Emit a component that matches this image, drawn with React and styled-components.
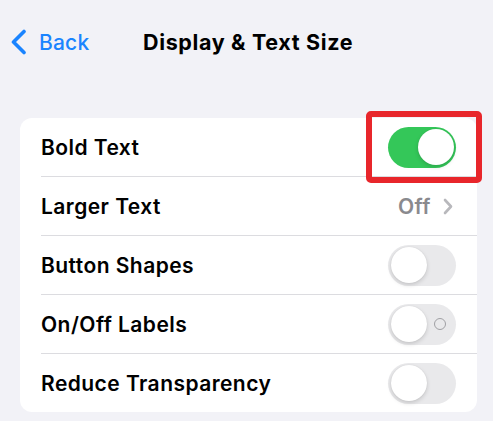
import React from 'react';
import styled, { createGlobalStyle } from 'styled-components';

const GlobalStyle = createGlobalStyle`
  html, body {
    margin: 0;
    padding: 0;
    background: #f2f2f7;
    font-family: Inter, "Noto Sans", sans-serif;
    -webkit-font-smoothing: antialiased;
  }
`;

const Page = styled.div`
  width: 493px;
  height: 421px;
  background: #f2f2f7;
  overflow: hidden;
`;

const NavBar = styled.div`
  display: flex;
  align-items: center;
  height: 84px;
  padding-left: 10px;
`;

const BackButton = styled.div`
  display: flex;
  align-items: center;
  gap: 12px;
  color: #1a84ff;
  font-size: 21px;
  font-weight: 500;
  letter-spacing: 0.2px;
  width: 133px;
`;

const Title = styled.div`
  font-size: 21.5px;
  font-weight: 700;
  color: #000;
  letter-spacing: 0.65px;
`;

const Card = styled.div`
  position: relative;
  margin: 34px 16px 0 20px;
  background: #fff;
  border-radius: 12px;
  padding-left: 21px;
`;

const Row = styled.div`
  display: flex;
  align-items: center;
  height: 58px;
  padding-right: 21px;
  border-bottom: ${p => (p.$last ? 'none' : '1px solid #dcdce0')};
`;

const Label = styled.div`
  flex: 1;
  font-size: 21px;
  font-weight: 600;
  color: #000;
  letter-spacing: 0.45px;
`;

const Value = styled.div`
  display: flex;
  align-items: center;
  gap: 12px;
  color: #8a8a8e;
  font-size: 21px;
  font-weight: 600;
  letter-spacing: 0.5px;
  padding-right: 3px;
`;

const Track = styled.div`
  position: relative;
  width: 68px;
  height: 41px;
  border-radius: 21px;
  background: ${p => (p.$on ? '#34c759' : '#e9e9eb')};
`;

const Knob = styled.div`
  position: absolute;
  top: 2.5px;
  left: ${p => (p.$on ? '29.5px' : '2.5px')};
  width: 36px;
  height: 36px;
  border-radius: 50%;
  background: #fff;
  box-shadow: 0 2px 4px rgba(0, 0, 0, 0.15), 0 0 1px rgba(0, 0, 0, 0.12);
`;

const OffMark = styled.div`
  position: absolute;
  right: 10px;
  top: 14px;
  width: 10px;
  height: 10px;
  border: 1.4px solid #a0a0a4;
  border-radius: 50%;
`;

const Highlight = styled.div`
  position: absolute;
  top: -7px;
  right: -5px;
  width: 104px;
  height: 60px;
  border: 6px solid #e8262b;
  border-radius: 5px;
`;

function Toggle({ on, labels }) {
  return (
    <Track $on={on}>
      {labels && !on && <OffMark />}
      <Knob $on={on} />
    </Track>
  );
}

export default function App() {
  return (
    <Page>
      <GlobalStyle />
      <NavBar>
        <BackButton>
          <svg width="17" height="26" viewBox="0 0 17 26">
            <path d="M14 2.5 L3.5 13 L14 23.5" fill="none" stroke="#1a84ff" strokeWidth="3.6" strokeLinecap="round" strokeLinejoin="round" />
          </svg>
          Back
        </BackButton>
        <Title>Display &amp; Text Size</Title>
      </NavBar>
      <Card>
        <Highlight />
        <Row>
          <Label>Bold Text</Label>
          <Toggle on />
        </Row>
        <Row>
          <Label>Larger Text</Label>
          <Value>
            Off
            <svg width="10" height="17" viewBox="0 0 10 17">
              <path d="M2 2 L8 8.5 L2 15" fill="none" stroke="#b8b8bc" strokeWidth="2.6" strokeLinecap="round" strokeLinejoin="round" />
            </svg>
          </Value>
        </Row>
        <Row>
          <Label>Button Shapes</Label>
          <Toggle />
        </Row>
        <Row>
          <Label>On/Off Labels</Label>
          <Toggle labels />
        </Row>
        <Row $last>
          <Label>Reduce Transparency</Label>
          <Toggle />
        </Row>
      </Card>
    </Page>
  );
}
